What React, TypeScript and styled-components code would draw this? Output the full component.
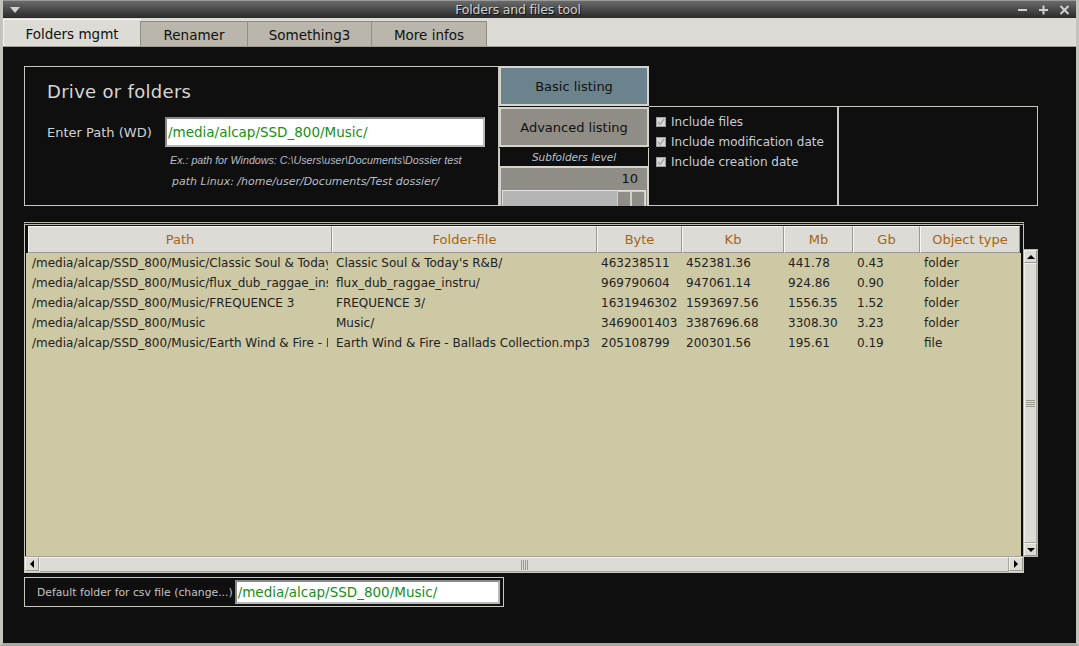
import React from 'react';
import styled, { createGlobalStyle } from 'styled-components';

const GlobalStyle = createGlobalStyle`
  html, body {
    margin: 0;
    padding: 0;
    background: #0f0f0f;
  }
  * {
    box-sizing: border-box;
  }
`;

const Window = styled.div`
  width: 1079px;
  height: 646px;
  display: flex;
  flex-direction: column;
  border-left: 3px solid #c4c4bc;
  border-right: 3px solid #c4c4bc;
  border-bottom: 3px solid #a8a8a0;
  font-family: 'DejaVu Sans', sans-serif;
  overflow: hidden;
`;

const TitleBar = styled.div`
  height: 18px;
  margin: 0 -3px;
  background: linear-gradient(#6a6a6a, #2a2a2a);
  border-top: 1px solid #9a9a9a;
  display: flex;
  align-items: center;
  padding: 0 8px 0 10px;
`;

const TitleText = styled.div`
  flex: 1;
  text-align: center;
  font-size: 12.5px;
  color: #cfcfcf;
  text-shadow: 1px 1px 0 #111;
  letter-spacing: -0.2px;
`;

const TitleButtons = styled.div`
  display: flex;
  gap: 8px;
  align-items: center;
`;

const TabBar = styled.div`
  height: 29px;
  background: #dcdbd5;
  display: flex;
  align-items: flex-end;
  border-bottom: 1px solid #9e9c92;
`;

const Tab = styled.div<{ $active?: boolean; $w: number }>`
  height: ${(p) => (p.$active ? 27 : 25)}px;
  width: ${(p) => p.$w}px;
  display: flex;
  align-items: center;
  justify-content: center;
  font-size: 13.5px;
  color: #111;
  background: ${(p) => (p.$active ? '#dcdbd5' : '#bab6ab')};
  border: 1px solid ${(p) => (p.$active ? '#f4f4f0' : '#8e8c84')};
  border-bottom: none;
  margin-right: -1px;
  padding-top: 1px;
`;

const Content = styled.div`
  flex: 1;
  background: #0f0f0f;
  padding: 19px 0 0 21px;
  display: flex;
  flex-direction: column;
`;

const TopRow = styled.div`
  display: flex;
  align-items: flex-start;
`;

const DrivePanel = styled.div`
  width: 475px;
  height: 140px;
  border: 1px solid #c8c8c0;
  padding: 14px 0 0 22px;
  display: flex;
  flex-direction: column;
`;

const PanelTitle = styled.div`
  font-size: 18px;
  color: #d6d6d6;
  letter-spacing: 0.3px;
`;

const PathRow = styled.div`
  display: flex;
  align-items: center;
  margin-top: 15px;
  margin-bottom: 2px;
`;

const FieldLabel = styled.div`
  font-size: 13px;
  color: #d2d2d2;
  width: 118px;
`;

const TextInput = styled.div<{ $w: number; $h: number }>`
  width: ${(p) => p.$w}px;
  height: ${(p) => p.$h}px;
  background: #fff;
  border: 2px solid #b8b8b8;
  border-top-color: #888;
  border-left-color: #888;
  color: #14901a;
  font-size: 13.5px;
  display: flex;
  align-items: center;
  padding-left: 1px;
  white-space: nowrap;
  overflow: hidden;
`;

const Hint = styled.div<{ $dejavu?: boolean; $indent: number }>`
  font-family: ${(p) => (p.$dejavu ? "'DejaVu Sans'" : "'Liberation Sans'")}, sans-serif;
  font-style: italic;
  font-size: ${(p) => (p.$dejavu ? 11 : 10.7)}px;
  color: #b6bec8;
  margin-left: ${(p) => p.$indent}px;
  line-height: 22px;
`;

const ButtonColumn = styled.div`
  width: 150px;
  height: 140px;
  display: flex;
  flex-direction: column;
`;

const ActionButton = styled.div<{ $blue?: boolean }>`
  height: 40px;
  border: 2px solid #d4d4cc;
  background: ${(p) => (p.$blue ? '#6b838c' : '#8f8d86')};
  color: #111;
  font-size: 13px;
  display: flex;
  align-items: center;
  justify-content: center;
  margin-bottom: 1px;
`;

const LevelLabel = styled.div`
  height: 18px;
  border-left: 1px solid #d4d4cc;
  border-right: 1px solid #d4d4cc;
  color: #b6c2d0;
  font-size: 10.5px;
  font-style: italic;
  display: flex;
  align-items: center;
  justify-content: center;
`;

const LevelBox = styled.div`
  flex: 1;
  background: #8f8d86;
  border: 2px solid #d4d4cc;
  border-bottom: none;
  display: flex;
  flex-direction: column;
`;

const LevelValue = styled.div`
  font-size: 13px;
  color: #111;
  text-align: right;
  padding: 3px 9px 0 0;
  height: 22px;
`;

const SliderTrack = styled.div`
  flex: 1;
  margin: 0 1px;
  background: #b4b4b4;
  border: 1px solid #e0e0e0;
  border-bottom: none;
  display: flex;
  justify-content: flex-end;
`;

const SliderThumb = styled.div`
  width: 14px;
  background: #8f8d86;
  border: 1px solid #cfcfc8;
  border-bottom: none;
`;

const OptionsArea = styled.div`
  display: flex;
  margin-top: 40px;
`;

const OptionsPanel = styled.div<{ $w: number; $first?: boolean }>`
  width: ${(p) => p.$w}px;
  height: 100px;
  border: 1px solid #c8c8c0;
  border-left: ${(p) => (p.$first ? 'none' : '1px solid #c8c8c0')};
  padding: 8px 0 0 7px;
  display: flex;
  flex-direction: column;
  gap: 6px;
`;

const CheckRow = styled.div`
  display: flex;
  align-items: center;
  gap: 5px;
  font-size: 12px;
  color: #c6ceda;
  height: 14px;
`;

const CheckBox = styled.div`
  width: 10px;
  height: 10px;
  background: #d8d8d8;
  border: 1px solid #a0a0a0;
  display: flex;
  align-items: center;
  justify-content: center;
`;

const TableArea = styled.div`
  display: flex;
  margin-top: 16px;
`;

const TableFrame = styled.div`
  width: 1000px;
  height: 351px;
  border: 1px solid #c8c8c0;
  border-top: 3px double #b8b8b0;
  display: flex;
  flex-direction: column;
  background: #0f0f0f;
`;

const HeaderRow = styled.div`
  display: flex;
  height: 27px;
  margin: 1px 0 0 3px;
`;

const HeaderCell = styled.div<{ $w: number }>`
  width: ${(p) => p.$w}px;
  background: #dcdbd5;
  border: 1px solid #f6f6f2;
  border-right-color: #9a988e;
  border-bottom-color: #9a988e;
  color: #a7640e;
  font-size: 13px;
  display: flex;
  align-items: center;
  justify-content: center;
`;

const Body = styled.div`
  flex: 1;
  background: #cdc9a5;
  margin: 0 2px 0 1px;
`;

const Row = styled.div`
  display: flex;
  height: 20px;
  margin-left: 2px;
`;

const Cell = styled.div<{ $w: number }>`
  width: ${(p) => p.$w - 4}px;
  margin-right: 4px;
  padding-left: 4px;
  font-size: 12px;
  color: #222;
  white-space: nowrap;
  overflow: hidden;
  display: flex;
  align-items: center;
`;

const HScroll = styled.div`
  height: 16px;
  background: #dcdbd5;
  border-top: 1px solid #a8a69c;
  display: flex;
  align-items: stretch;
`;

const ScrollTrack = styled.div<{ $vertical?: boolean }>`
  flex: 1;
  display: flex;
  align-items: center;
  justify-content: center;
  flex-direction: ${(p) => (p.$vertical ? 'column' : 'row')};
  gap: 1px;
  border: 1px solid #f0f0ec;
  border-right-color: #a8a69c;
  border-bottom-color: #a8a69c;
`;

const Grip = styled.div<{ $vertical?: boolean }>`
  width: ${(p) => (p.$vertical ? 9 : 1)}px;
  height: ${(p) => (p.$vertical ? 1 : 10)}px;
  background: #9a988e;
`;

const ArrowButton = styled.div<{ $size: number }>`
  width: ${(p) => p.$size}px;
  height: ${(p) => p.$size}px;
  background: #dcdbd5;
  border: 1px solid #f0f0ec;
  border-right-color: #9a988e;
  border-bottom-color: #9a988e;
  display: flex;
  align-items: center;
  justify-content: center;
  flex-shrink: 0;
`;

const VScroll = styled.div`
  width: 15px;
  height: 308px;
  margin-top: 27px;
  margin-left: -1px;
  background: #dcdbd5;
  border: 1px solid #b8b8b0;
  display: flex;
  flex-direction: column;
`;

const CsvBox = styled.div`
  width: 480px;
  height: 30px;
  margin-top: 4px;
  border: 1px solid #c8c8c0;
  display: flex;
  align-items: center;
  padding-left: 12px;
  gap: 2px;
`;

const CsvLabel = styled.div`
  font-size: 10.8px;
  color: #c4c4c4;
  white-space: nowrap;
`;

const Tri = ({ dir, size = 4 }: { dir: 'up' | 'down' | 'left' | 'right'; size?: number }) => {
  const pts: Record<string, string> = {
    up: `0,${size} ${size},0 ${size * 2},${size}`,
    down: `0,0 ${size * 2},0 ${size},${size}`,
    left: `${size},0 ${size},${size * 2} 0,${size}`,
    right: `0,0 0,${size * 2} ${size},${size}`,
  };
  const horiz = dir === 'left' || dir === 'right';
  return (
    <svg width={horiz ? size : size * 2} height={horiz ? size * 2 : size}>
      <polygon points={pts[dir]} fill="#000" />
    </svg>
  );
};

const columns = [
  { name: 'Path', w: 304 },
  { name: 'Folder-file', w: 265 },
  { name: 'Byte', w: 85 },
  { name: 'Kb', w: 102 },
  { name: 'Mb', w: 69 },
  { name: 'Gb', w: 67 },
  { name: 'Object type', w: 100 },
];

const rows = [
  ["/media/alcap/SSD_800/Music/Classic Soul & Today's R&B", "Classic Soul & Today's R&B/", '463238511', '452381.36', '441.78', '0.43', 'folder'],
  ['/media/alcap/SSD_800/Music/flux_dub_raggae_instru', 'flux_dub_raggae_instru/', '969790604', '947061.14', '924.86', '0.90', 'folder'],
  ['/media/alcap/SSD_800/Music/FREQUENCE 3', 'FREQUENCE 3/', '1631946302', '1593697.56', '1556.35', '1.52', 'folder'],
  ['/media/alcap/SSD_800/Music', 'Music/', '3469001403', '3387696.68', '3308.30', '3.23', 'folder'],
  ['/media/alcap/SSD_800/Music/Earth Wind & Fire - Ballads Collection.mp3', 'Earth Wind & Fire - Ballads Collection.mp3', '205108799', '200301.56', '195.61', '0.19', 'file'],
];

const options = ['Include files', 'Include modification date', 'Include creation date'];

const App: React.FC = () => {
  return (
    <Window>
      <GlobalStyle />
      <TitleBar>
        <svg width="10" height="6">
          <polygon points="0,0 10,0 5,6" fill="#d0d0d0" />
        </svg>
        <TitleText>Folders and files tool</TitleText>
        <TitleButtons>
          <svg width="13" height="12">
            <rect x="2" y="5" width="9" height="2" fill="#d0d0d0" />
          </svg>
          <svg width="13" height="12">
            <rect x="2" y="5" width="9" height="2" fill="#d0d0d0" />
            <rect x="5.5" y="1.5" width="2" height="9" fill="#d0d0d0" />
          </svg>
          <svg width="13" height="12">
            <path d="M2.5 2 L10.5 10 M10.5 2 L2.5 10" stroke="#d0d0d0" strokeWidth="2" />
          </svg>
        </TitleButtons>
      </TitleBar>

      <TabBar>
        <Tab $active $w={138}>Folders mgmt</Tab>
        <Tab $w={108}>Renamer</Tab>
        <Tab $w={125}>Something3</Tab>
        <Tab $w={116}>More infos</Tab>
      </TabBar>

      <Content>
        <TopRow>
          <DrivePanel>
            <PanelTitle>Drive or folders</PanelTitle>
            <PathRow>
              <FieldLabel>Enter Path (WD)</FieldLabel>
              <TextInput $w={320} $h={30}>/media/alcap/SSD_800/Music/</TextInput>
            </PathRow>
            <Hint $indent={123}>Ex.: path for Windows: C:\Users\user\Documents\Dossier test</Hint>
            <Hint $dejavu $indent={125}>path Linux: /home/user/Documents/Test dossier/</Hint>
          </DrivePanel>

          <ButtonColumn>
            <ActionButton $blue>Basic listing</ActionButton>
            <ActionButton>Advanced listing</ActionButton>
            <LevelLabel>Subfolders level</LevelLabel>
            <LevelBox>
              <LevelValue>10</LevelValue>
              <SliderTrack>
                <SliderThumb />
                <SliderThumb />
              </SliderTrack>
            </LevelBox>
          </ButtonColumn>

          <OptionsArea>
            <OptionsPanel $w={189} $first>
              {options.map((o) => (
                <CheckRow key={o}>
                  <CheckBox>
                    <svg width="8" height="8">
                      <path d="M1 4 L3 6.5 L7 1" stroke="#a8a8a8" strokeWidth="1.6" fill="none" />
                    </svg>
                  </CheckBox>
                  {o}
                </CheckRow>
              ))}
            </OptionsPanel>
            <OptionsPanel $w={200} />
          </OptionsArea>
        </TopRow>

        <TableArea>
          <TableFrame>
            <HeaderRow>
              {columns.map((c) => (
                <HeaderCell key={c.name} $w={c.w}>{c.name}</HeaderCell>
              ))}
            </HeaderRow>
            <Body>
              {rows.map((r, i) => (
                <Row key={i}>
                  {r.map((v, j) => (
                    <Cell key={j} $w={columns[j].w}>{v}</Cell>
                  ))}
                </Row>
              ))}
            </Body>
            <HScroll>
              <ArrowButton $size={14}><Tri dir="left" /></ArrowButton>
              <ScrollTrack>
                {[0, 1, 2, 3].map((g) => <Grip key={g} />)}
              </ScrollTrack>
              <ArrowButton $size={14}><Tri dir="right" /></ArrowButton>
            </HScroll>
          </TableFrame>
          <VScroll>
            <ArrowButton $size={13}><Tri dir="up" /></ArrowButton>
            <ScrollTrack $vertical>
              {[0, 1, 2, 3].map((g) => <Grip key={g} $vertical />)}
            </ScrollTrack>
            <ArrowButton $size={13}><Tri dir="down" /></ArrowButton>
          </VScroll>
        </TableArea>

        <CsvBox>
          <CsvLabel>Default folder for csv file (change...)</CsvLabel>
          <TextInput $w={265} $h={24}>/media/alcap/SSD_800/Music/</TextInput>
        </CsvBox>
      </Content>
    </Window>
  );
};

export default App;
